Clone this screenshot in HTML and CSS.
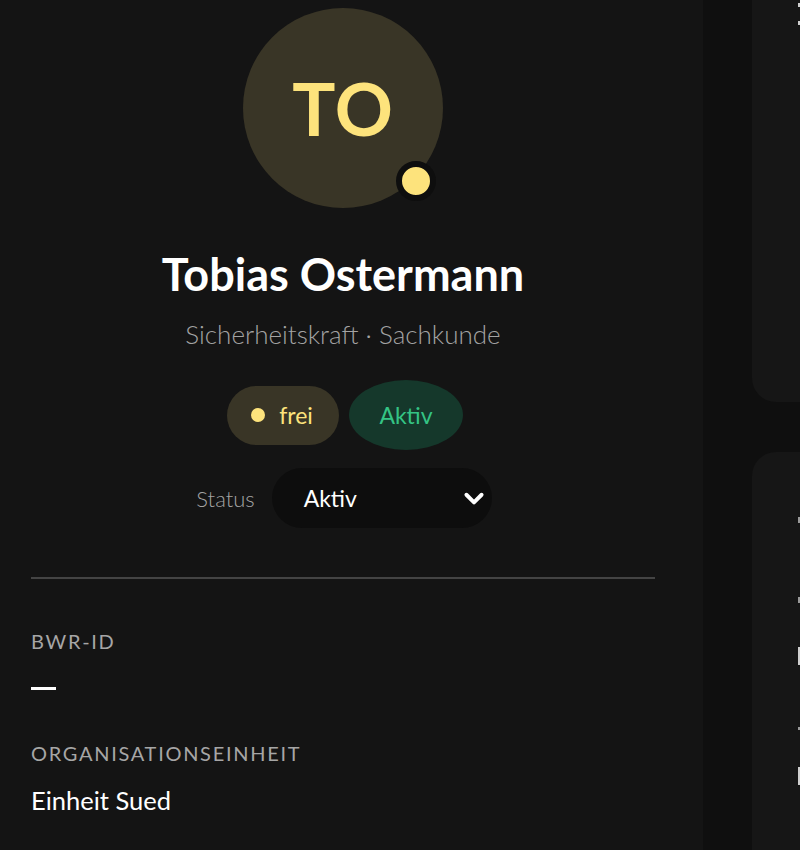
FILE: index.html
```html
<!DOCTYPE html>
<html lang="de">
<head>
<meta charset="utf-8">
<title>Profil</title>
<link rel="stylesheet" href="styles.css">
</head>
<body>
<div class="layout">
  <main class="panel">
    <section class="hero">
      <div class="avatar">
        <span class="initials">TO</span>
        <span class="presence"></span>
      </div>
      <h1 class="name">Tobias Ostermann</h1>
      <p class="role">Sicherheitskraft · Sachkunde</p>
      <div class="pills">
        <span class="pill pill-free"><span class="dot"></span>frei</span>
        <span class="pill pill-active">Aktiv</span>
      </div>
      <div class="status-row">
        <span class="status-label">Status</span>
        <div class="select">
          <span>Aktiv</span>
          <svg class="chevron" viewBox="0 0 24 24" width="22" height="22" aria-hidden="true"><path d="M5 9l7 7 7-7" fill="none" stroke="#fff" stroke-width="3.6" stroke-linecap="round" stroke-linejoin="round"/></svg>
        </div>
      </div>
    </section>
    <hr class="divider">
    <dl class="fields">
      <dt>BWR-ID</dt>
      <dd class="dash"><span class="dash-bar"></span></dd>
      <dt>Organisationseinheit</dt>
      <dd>Einheit Sued</dd>
    </dl>
  </main>
  <aside class="side">
    <div class="card card-top">
      <span class="peek p1"></span>
      <span class="peek p2"></span>
    </div>
    <div class="card card-bottom">
      <span class="peek p3"></span>
      <span class="peek p4"></span>
      <span class="peek p5"></span>
      <span class="peek p6"></span>
      <span class="peek p7"></span>
    </div>
  </aside>
</div>
</body>
</html>
```

FILE: styles.css
```css
* { box-sizing: border-box; }
html, body {
  margin: 0;
  height: 100%;
  background: #0f0f0f;
  overflow: hidden;
}
body {
  font-family: "Lato", "Noto Sans", sans-serif;
  color: #fff;
}
.layout {
  display: flex;
  height: 850px;
  width: 800px;
}
.panel {
  width: 703px;
  flex: none;
  background: #141414;
  padding: 8px 48px 0 31px;
}
.hero {
  display: flex;
  flex-direction: column;
  align-items: center;
}
.avatar {
  position: relative;
  width: 200px;
  height: 200px;
  border-radius: 50%;
  background: #393526;
  display: flex;
  align-items: center;
  justify-content: center;
}
.initials {
  color: #fde37c;
  font-size: 72px;
  font-weight: 700;
  letter-spacing: 1px;
}
.presence {
  position: absolute;
  left: 153px;
  top: 153px;
  width: 40px;
  height: 40px;
  border-radius: 50%;
  background: #fde37c;
  border: 6px solid #0e0e0e;
}
.name {
  margin: 42px 0 0;
  font-size: 45px;
  line-height: 48px;
  font-weight: 700;
  color: #fff;
}
.role {
  margin: 21px 0 0;
  font-size: 26px;
  line-height: 30px;
  font-weight: 300;
  color: #a3a3a3;
}
.pills {
  margin-top: 31px;
  display: flex;
  gap: 10px;
  align-items: center;
  margin-left: 4px;
}
.pill {
  display: flex;
  align-items: center;
  justify-content: center;
  font-size: 23px;
}
.pill-free {
  width: 112px;
  height: 59px;
  border-radius: 30px;
  background: #393526;
  color: #fde37c;
  gap: 14px;
  padding-right: 2px;
}
.dot {
  width: 14px;
  height: 14px;
  border-radius: 50%;
  background: #fde37c;
}
.pill-active {
  width: 114px;
  height: 70px;
  border-radius: 50%;
  background: #15382b;
  color: #34c485;
}
.status-row {
  margin-top: 18px;
  display: flex;
  align-items: center;
  gap: 17px;
  margin-left: 2px;
}
.status-label {
  font-size: 22px;
  font-weight: 300;
  color: #a3a3a3;
}
.select {
  width: 220px;
  height: 60px;
  border-radius: 30px;
  background: #0d0d0d;
  display: flex;
  align-items: center;
  justify-content: space-between;
  padding: 0 5px 0 32px;
  font-size: 23px;
  color: #fff;
}
.chevron {
  width: 26px;
  height: 26px;
}
.divider {
  margin: 49px 0 0;
  border: 0;
  height: 2px;
  background: #444;
}
.fields {
  margin: 50px 0 0;
}
.fields dt {
  font-size: 20px;
  line-height: 24px;
  letter-spacing: 1.7px;
  text-transform: uppercase;
  color: #a6a6a6;
}
.fields dd {
  margin: 23px 0 41px;
  font-size: 25.5px;
  line-height: 24px;
  color: #fff;
}
.fields dd.dash {
  height: 24px;
  display: flex;
  align-items: center;
}
.dash-bar {
  display: block;
  width: 25px;
  height: 3px;
  background: #fff;
}
.side {
  flex: 1;
  padding-left: 49px;
  display: flex;
  flex-direction: column;
  gap: 50px;
  background: #0f0f0f;
}
.card {
  position: relative;
  background: #161616;
  width: 100px;
  overflow: hidden;
}
.card-top {
  height: 402px;
  border-radius: 0 0 0 24px;
}
.card-bottom {
  flex: 1;
  border-radius: 24px 0 0 0;
}
.peek {
  position: absolute;
  left: 46px;
  width: 2px;
  height: 4px;
  background: #cfcfcf;
}
.p1 { top: 3px; }
.p2 { top: 21px; }
.p3 { top: 65px; height: 6px; background: #9a9a9a; }
.p4 { top: 145px; height: 6px; background: #9a9a9a; }
.p5 { top: 195px; height: 18px; }
.p6 { top: 275px; height: 3px; background: #9a9a9a; }
.p7 { top: 315px; height: 18px; }
```
